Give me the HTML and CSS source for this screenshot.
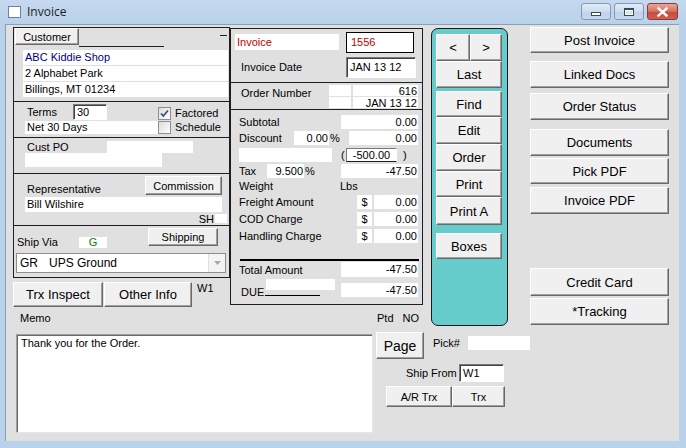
FILE: index.html
```html
<!DOCTYPE html>
<html>
<head>
<meta charset="utf-8">
<title>Invoice</title>
<link rel="stylesheet" href="styles.css">
</head>
<body>
<div class="window">
  <div class="titlebar">
    <span class="appicon"></span>
    <span class="title">Invoice</span>
    <div class="caps">
      <span class="cap"><i class="g-min"></i></span>
      <span class="cap"><i class="g-max"></i></span>
      <span class="cap cap-close"><svg width="13" height="10" viewBox="0 0 13 10"><path d="M2.5 1.5 L10.5 8.5 M10.5 1.5 L2.5 8.5" stroke="#fff" stroke-width="2.4" stroke-linecap="square"/></svg></span>
    </div>
  </div>

  <div class="client">
    <div class="leftcol">
      <div class="group">
        <div class="sec sec-cust">
          <div class="cust-head">
            <div class="btn btn-s btn-cust">Customer</div>
            <div class="tabline"></div>
            <div class="dash"></div>
          </div>
          <div class="fld addr addr1 navy">ABC Kiddie Shop</div>
          <div class="fld addr">2 Alphabet Park</div>
          <div class="fld addr">Billings, MT 01234</div>
        </div>
        <div class="sec sec-terms">
          <div class="row terms-r1">
            <span class="lbl lbl-terms">Terms</span>
            <div class="fld sunk terms-in">30</div>
            <span class="chk chk-a"><svg width="11" height="11" viewBox="0 0 11 11"><path d="M2 5.5 L4.3 8 L9 2.5" fill="none" stroke="#3d4f7a" stroke-width="1.8"/></svg></span>
            <span class="chk-lbl chk-lbl-a">Factored</span>
          </div>
          <div class="row terms-r2">
            <div class="fld net">Net 30 Days</div>
            <span class="chk"></span>
            <span class="chk-lbl">Schedule</span>
          </div>
        </div>
        <div class="sec sec-po">
          <div class="row po-r1"><span class="lbl lbl-po">Cust PO</span><div class="fld po-f1"></div></div>
          <div class="fld po-f2"></div>
        </div>
        <div class="sec sec-rep">
          <div class="row rep-r1"><span class="lbl lbl-rep">Representative</span><div class="btn btn-s btn-comm">Commission</div></div>
          <div class="fld rep-f">Bill Wilshire</div>
          <div class="row rep-r3"><span class="lbl lbl-sh">SH</span><div class="fld sh-f"></div></div>
        </div>
        <div class="sec sec-ship">
          <div class="row ship-r1"><span class="lbl lbl-ship">Ship Via</span><div class="fld g-f">G</div><div class="btn btn-s btn-ship">Shipping</div></div>
          <div class="combo"><span class="c-code">GR</span><span>UPS Ground</span><span class="c-arrow"><svg width="7" height="4" viewBox="0 0 7 4"><path d="M0 0 H7 L3.5 4 Z" fill="#a8a8a8"/></svg></span></div>
        </div>
      </div>
      <div class="row leftbtns">
        <div class="btn btn-trx">Trx Inspect</div>
        <div class="btn btn-oth">Other Info</div>
        <span class="lbl w1">W1</span>
      </div>
    </div>

    <div class="mid">
      <div class="ms1">
        <div class="ms1-r1">
          <div class="inv-lbl">Invoice</div>
          <div class="inv-no">1556</div>
        </div>
        <div class="ms1-r2">
          <span class="lbl lbl-date">Invoice Date</span>
          <div class="fld sunk date-f">JAN 13 12</div>
        </div>
      </div>
      <div class="ms2">
        <span class="lbl lbl-ord">Order Number</span>
        <div class="ord-grid">
          <div class="fld"></div><div class="fld r">616</div>
          <div class="fld"></div><div class="fld r">JAN 13 12</div>
        </div>
      </div>
      <div class="ms3">
        <div class="trow tr-sub"><span class="tl">Subtotal</span><div class="fld amt">0.00</div></div>
        <div class="trow tr-disc"><span class="tl tl-disc">Discount</span><div class="fld r pct">0.00</div><span class="pcts">%</span><div class="fld amt amt-d">0.00</div></div>
        <div class="trow tr-par"><div class="fld par-f"></div><span class="paren-l">(</span><div class="neg">-500.00</div><span class="paren-r">)</span></div>
        <div class="trow tr-tax"><span class="tl tl-tax">Tax</span><div class="fld r taxp">9.500</div><span class="pcts">%</span><div class="fld amt">-47.50</div></div>
        <div class="trow tr-wt"><span class="tl tl-wt">Weight</span><span>Lbs</span></div>
        <div class="trow tr-fr"><span class="tl">Freight Amount</span><div class="fld dol">$</div><div class="fld amt amt-s">0.00</div></div>
        <div class="trow tr-cod"><span class="tl">COD Charge</span><div class="fld dol">$</div><div class="fld amt amt-s">0.00</div></div>
        <div class="trow tr-cod"><span class="tl">Handling Charge</span><div class="fld dol">$</div><div class="fld amt amt-s">0.00</div></div>
        <div class="thick"></div>
        <div class="trow tr-tot"><span class="tl">Total Amount</span><div class="fld amt amt-t">-47.50</div></div>
        <div class="trow tr-due">
          <div class="due-left">
            <div class="fld due-f"></div>
            <div class="due-txt">DUE<span class="due-line"></span></div>
          </div>
          <div class="fld amt amt-due">-47.50</div>
        </div>
      </div>
    </div>

    <div class="teal">
      <div class="row">
        <div class="btn tb-lt">&lt;</div>
        <div class="btn tb-gt">&gt;</div>
      </div>
      <div class="btn tb tb-27">Last</div>
      <div class="btn tb tb-find">Find</div>
      <div class="btn tb tb-27">Edit</div>
      <div class="btn tb tb-27">Order</div>
      <div class="btn tb tb-26">Print</div>
      <div class="btn tb tb-28">Print A</div>
      <div class="btn tb tb-box">Boxes</div>
    </div>

    <div class="rightcol">
      <div class="btn rb rb-post">Post Invoice</div>
      <div class="btn rb rb-linked">Linked Docs</div>
      <div class="btn rb rb-status">Order Status</div>
      <div class="btn rb rb-docs">Documents</div>
      <div class="btn rb rb-pick">Pick PDF</div>
      <div class="btn rb rb-inv">Invoice PDF</div>
      <div class="btn rb rb-cc">Credit Card</div>
      <div class="btn rb rb-trk">*Tracking</div>
    </div>

    <div class="memo-row">
      <span class="lbl memo-lbl">Memo</span>
      <span class="lbl">Ptd</span>
      <span class="lbl ptd-no">NO</span>
    </div>

    <div class="bottom">
      <div class="memo">Thank you for the Order.</div>
      <div class="side">
        <div class="row side-r1">
          <div class="btn btn-page">Page</div>
          <span class="lbl lbl-pick">Pick#</span>
          <div class="fld pick-f"></div>
        </div>
        <div class="row side-r2">
          <span class="lbl lbl-from">Ship From</span>
          <div class="fld sunk from-f">W1</div>
        </div>
        <div class="row side-r3">
          <div class="btn btn-s btn-ar">A/R Trx</div>
          <div class="btn btn-s btn-tx">Trx</div>
        </div>
      </div>
    </div>
  </div>
</div>
</body>
</html>
```

FILE: styles.css
```css
* { box-sizing: border-box; }

body {
  margin: 0;
  background: #b9d1ea;
  font-family: "Liberation Sans", Arial, sans-serif;
  font-size: 11px;
  color: #000;
}

.window {
  width: 686px;
  height: 448px;
  overflow: hidden;
  background: linear-gradient(#c5d9ef, #b9d1ea 24px);
}

/* ---------- title bar ---------- */
.titlebar {
  height: 24px;
  display: flex;
  align-items: flex-start;
}
.appicon {
  width: 13px;
  height: 12px;
  margin: 6px 0 0 8px;
  background: #fff;
  border: 1px solid #6c82a0;
}
.title {
  font-family: "Open Sans", "Noto Sans", sans-serif;
  font-size: 12px;
  line-height: 17px;
  margin: 3px 0 0 6px;
  color: #1e1e1e;
}
.caps {
  margin: 3px 8px 0 auto;
  display: flex;
  gap: 3px;
}
.cap {
  width: 30px;
  height: 17px;
  border: 1px solid #8298b5;
  border-radius: 3px;
  background: linear-gradient(#e2ecf8, #cddcef 50%, #bed0e7 51%, #c9daee);
  display: flex;
  align-items: center;
  justify-content: center;
}
.cap-close {
  width: 31px;
  border-color: #8a3b34;
  background: linear-gradient(#e9a697, #d7705f 50%, #c74a3c 51%, #d45c4c);
}
.g-min {
  width: 10px;
  height: 4px;
  margin-top: 5px;
  border: 1px solid #39485c;
  background: #fff;
}
.g-max {
  width: 10px;
  height: 8px;
  border: 1px solid #39485c;
  border-top-width: 2px;
  background: #d8e3f1;
  box-shadow: inset 0 0 0 1px #fff;
}

/* ---------- client ---------- */
.client {
  margin-left: 5px;
  width: 674px;
  height: 417px;
  background: #e0e0e0;
  border-top: 1px solid #8a9fb9;
  border-left: 1px solid #8a9fb9;
  padding: 2px 0 0 7px;
  display: grid;
  grid-template-columns: 217px 193px 8px 77px 22px 139px;
  grid-template-rows: 279px 24px 102px;
}

.row { display: flex; }
.lbl { white-space: nowrap; }

.btn {
  display: flex;
  align-items: center;
  justify-content: center;
  background: #f0f0f0;
  border: 1px solid;
  border-color: #fff #696969 #696969 #fff;
  box-shadow: inset -1px -1px 0 #a0a0a0;
  font-size: 13px;
  white-space: nowrap;
  flex: none;
}
.btn-s { font-size: 11px; }

.fld {
  background: #fff;
  height: 15px;
  line-height: 15px;
  padding: 0 2px;
  white-space: nowrap;
  overflow: hidden;
  flex: none;
}
.sunk {
  border: 1px solid;
  border-color: #7a7a7a #fff #fff #7a7a7a;
  box-shadow: inset 1px 1px 0 #404040;
}
.r { text-align: right; }
.navy { color: #000080; }

/* ---------- left group ---------- */
.leftcol { grid-column: 1; grid-row: 1; }

.group {
  height: 251px;
  border: 1px solid #1e1e1e;
  display: flex;
  flex-direction: column;
}
.sec { border-bottom: 1px solid #1e1e1e; flex: none; }
.sec-cust { height: 74px; }
.sec-terms { height: 36px; }
.sec-po { height: 36px; }
.sec-rep { height: 52px; }
.sec-ship { height: 51px; border-bottom: 0; }

.cust-head { display: flex; height: 19px; }
.btn-cust { width: 64px; height: 17px; margin-left: 1px; }
.tabline { width: 85px; border-bottom: 1px solid #222; }
.dash { width: 7px; height: 1px; background: #222; margin: 7px 2px 0 auto; }
.addr { width: 205px; margin: 1px 0 0 9px; }
.addr1 { margin-top: 3px; }

.terms-r1 { margin-top: 2px; height: 16px; align-items: flex-start; }
.lbl-terms { margin-left: 13px; width: 46px; line-height: 16px; }
.terms-in { width: 34px; height: 16px; line-height: 14px; padding-left: 3px; }
.chk {
  width: 13px;
  height: 13px;
  border: 1px solid #8e8f8f;
  background: linear-gradient(135deg, #dcdcdc, #fff);
  flex: none;
  display: flex;
  align-items: center;
  justify-content: center;
}
.chk-a { margin: 3px 0 0 51px; }
.chk-lbl { margin-left: 4px; line-height: 13px; }
.chk-lbl-a { margin-top: 3px; }
.terms-r2 { margin-top: 1px; height: 13px; }
.net { margin-left: 11px; width: 133px; height: 13px; line-height: 13px; }

.po-r1 { margin-top: 3px; height: 12px; }
.lbl-po { margin-left: 13px; width: 80px; line-height: 12px; }
.po-f1 { width: 86px; height: 12px; }
.po-f2 { margin-left: 11px; width: 137px; height: 14px; }

.rep-r1 { margin-top: 2px; height: 20px; align-items: flex-end; }
.lbl-rep { margin-left: 13px; line-height: 14px; }
.btn-comm { margin: 0 7px 0 auto; width: 77px; height: 19px; align-self: flex-start; }
.rep-f { margin: 1px 0 0 11px; width: 197px; height: 15px; }
.rep-r3 { margin-top: 1px; height: 11px; justify-content: flex-end; align-items: flex-start; }
.lbl-sh { line-height: 13px; margin-right: 1px; }
.sh-f { width: 12px; height: 9px; margin: 1px 2px 0 0; }

.ship-r1 { margin-top: 2px; height: 19px; align-items: flex-start; }
.lbl-ship { margin: 8px 0 0 3px; width: 62px; line-height: 12px; }
.g-f { margin-top: 9px; width: 28px; height: 11px; line-height: 11px; color: #008000; text-align: center; }
.btn-ship { margin-left: 41px; width: 70px; height: 18px; }
.combo {
  margin: 6px 0 0 2px;
  width: 210px;
  height: 20px;
  border: 1px solid #8e8e8e;
  background: #fff;
  display: flex;
  align-items: center;
  padding-left: 3px;
  font-size: 12px;
}
.c-code { width: 29px; }
.c-arrow {
  margin-left: auto;
  width: 17px;
  height: 18px;
  background: #f4f4f4;
  border-left: 1px solid #e0e0e0;
  display: flex;
  align-items: center;
  justify-content: center;
}

.leftbtns { margin-top: 4px; height: 25px; }
.btn-trx { width: 90px; height: 25px; }
.btn-oth { width: 88px; height: 25px; margin-left: 1px; }
.w1 { margin-left: 5px; line-height: 12px; }

/* ---------- middle totals panel ---------- */
.mid {
  grid-column: 2;
  grid-row: 1;
  margin-top: 1px;
  height: 277px;
  border: 1px solid #1e1e1e;
  display: flex;
  flex-direction: column;
}
.ms1 { height: 54px; border-bottom: 1px solid #1e1e1e; flex: none; }
.ms1-r1 { display: flex; align-items: flex-start; height: 24px; }
.inv-lbl {
  margin: 5px 0 0 4px;
  width: 104px;
  height: 16px;
  line-height: 16px;
  padding-left: 2px;
  background: #fff;
  color: #c00000;
}
.inv-no {
  margin: 3px 0 0 7px;
  width: 68px;
  height: 21px;
  border: 1px solid #000;
  background: #fff;
  color: #c00000;
  line-height: 19px;
  padding-left: 4px;
}
.ms1-r2 { display: flex; margin-top: 4px; height: 21px; }
.lbl-date { margin-left: 10px; width: 105px; line-height: 21px; }
.date-f { width: 70px; height: 21px; line-height: 19px; padding-left: 3px; }

.ms2 { height: 27px; border-bottom: 1px solid #1e1e1e; display: flex; flex: none; }
.lbl-ord { margin: 1px 0 0 10px; width: 88px; line-height: 18px; }
.ord-grid {
  margin-top: 2px;
  display: grid;
  grid-template-columns: 22px 65px;
  grid-template-rows: 11px 11px;
  column-gap: 2px;
  row-gap: 1px;
}
.ord-grid .fld { height: 11px; line-height: 12px; padding: 0 1px; }

.ms3 { flex: 1; display: flex; flex-direction: column; }
.trow { display: flex; height: 14px; align-items: center; flex: none; }
.tl { margin-left: 8px; white-space: nowrap; }
.amt {
  margin: 0 4px 0 auto;
  width: 77px;
  height: 14px;
  line-height: 14px;
  text-align: right;
  padding-right: 1px;
}
.tr-sub { margin-top: 5px; }
.tr-disc { margin-top: 2px; }
.tl-disc { width: 55px; }
.pct { width: 35px; height: 14px; line-height: 14px; padding-right: 1px; }
.pcts { width: 10px; padding-left: 1px; }
.amt-d { width: 69px; }
.tr-par { margin-top: 3px; }
.par-f { margin-left: 8px; width: 93px; height: 14px; }
.paren-l { margin-left: 9px; width: 4px; }
.neg {
  margin-left: 1px;
  width: 51px;
  height: 14px;
  line-height: 12px;
  text-align: center;
  background: #fff;
  border: 1px solid;
  border-color: #7a7a7a #fff #1e1e1e #7a7a7a;
}
.paren-r { margin-left: 6px; }
.tr-tax { margin-top: 2px; }
.tl-tax { width: 28px; }
.taxp { width: 37px; height: 14px; line-height: 14px; padding-right: 1px; }
.tr-wt { height: 15px; }
.tl-wt { width: 101px; }
.tr-fr { margin-top: 2px; }
.tr-cod { margin-top: 3px; }
.dol { margin-left: auto; width: 15px; height: 14px; line-height: 14px; text-align: center; padding: 0; }
.amt-s { margin-left: 2px; width: 44px; }
.thick { margin: 16px 3px 0 9px; height: 2px; background: #000; flex: none; }
.tr-tot { margin-top: 1px; height: 15px; }
.amt-t { height: 15px; line-height: 15px; }
.tr-due { margin-top: 2px; height: 19px; align-items: flex-start; }
.due-left { margin-left: 9px; width: 95px; }
.due-f { margin-left: 26px; width: 69px; height: 11px; }
.due-txt { margin-top: -4px; line-height: 13px; padding-left: 1px; }
.due-line { display: inline-block; width: 55px; border-bottom: 1px solid #000; vertical-align: baseline; margin-left: 1px; }
.amt-due { margin-top: 4px; }

/* ---------- teal button panel ---------- */
.teal {
  grid-column: 4;
  grid-row: 1 / 3;
  margin-top: 1px;
  height: 298px;
  border: 1px solid #1a1a1a;
  border-radius: 7px;
  background: #66cccc;
  padding: 5px 0 0 4px;
  display: flex;
  flex-direction: column;
}
.tb-lt { width: 34px; height: 27px; }
.tb-gt { width: 32px; height: 27px; }
.tb { width: 66px; }
.tb-26 { height: 26px; }
.tb-27 { height: 27px; }
.tb-28 { height: 28px; }
.tb-find { height: 26px; margin-top: 3px; }
.tb-box { height: 26px; margin-top: 8px; }

/* ---------- right button column ---------- */
.rightcol {
  grid-column: 6;
  grid-row: 1 / 3;
  display: flex;
  flex-direction: column;
}
.rb { width: 139px; height: 27px; }
.rb-post { height: 26px; }
.rb-linked { margin-top: 8px; }
.rb-status { margin-top: 5px; }
.rb-docs { margin-top: 9px; }
.rb-pick { margin-top: 2px; height: 26px; }
.rb-inv { margin-top: 3px; }
.rb-cc { margin-top: 54px; height: 28px; }
.rb-trk { margin-top: 2px; }

/* ---------- memo & bottom ---------- */
.memo-row {
  grid-column: 1 / 3;
  grid-row: 2;
  display: flex;
  align-items: center;
}
.memo-lbl { margin-left: 7px; width: 357px; }
.ptd-no { margin-left: 9px; }

.bottom {
  grid-column: 1 / 7;
  grid-row: 3;
  display: flex;
  align-items: flex-start;
  padding-left: 3px;
}
.memo {
  width: 357px;
  height: 99px;
  margin-top: 4px;
  background: #fff;
  border: 1px solid;
  border-color: #a0a0a0 #e6e6e6 #e6e6e6 #a0a0a0;
  box-shadow: inset 1px 1px 0 #696969;
  padding: 1px 4px;
  line-height: 14px;
}
.side { margin-left: 3px; display: flex; flex-direction: column; }
.side-r1 { margin-top: 2px; height: 27px; }
.btn-page { width: 48px; height: 27px; font-size: 14px; }
.lbl-pick { margin-left: 9px; width: 35px; line-height: 22px; }
.pick-f { margin-top: 4px; width: 62px; height: 14px; }
.side-r2 { margin-top: 5px; height: 18px; }
.lbl-from { margin-left: 30px; width: 53px; line-height: 18px; }
.from-f { width: 45px; height: 18px; line-height: 16px; padding-left: 3px; }
.side-r3 { margin-top: 4px; }
.btn-ar { margin-left: 10px; width: 66px; height: 21px; }
.btn-tx { width: 53px; height: 21px; }
```
